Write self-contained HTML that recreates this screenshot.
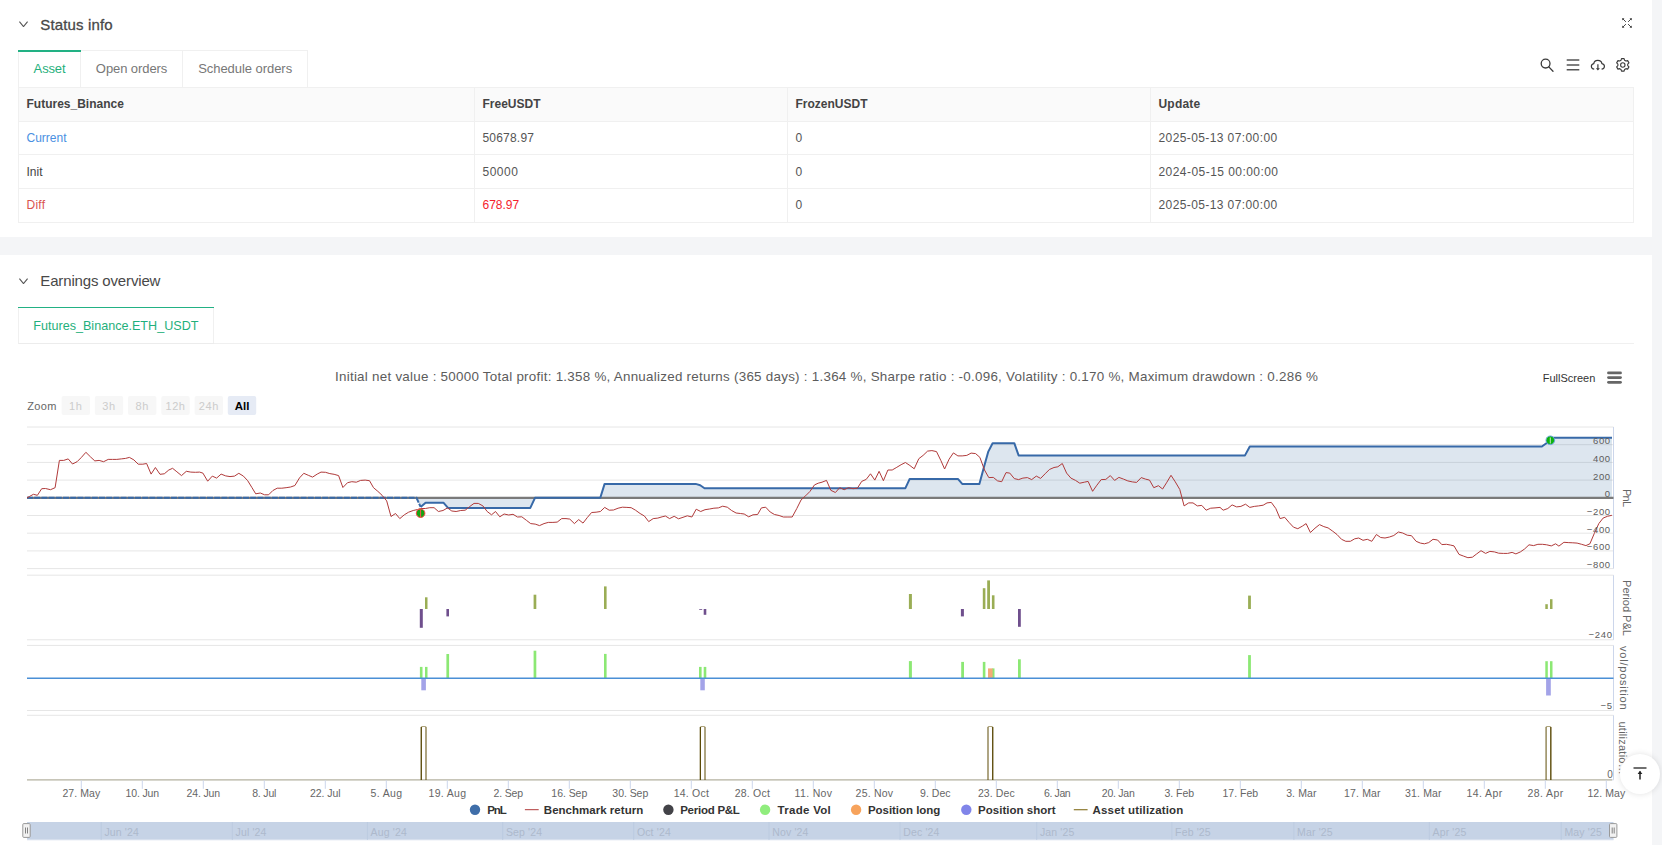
<!DOCTYPE html>
<html><head><meta charset="utf-8"><title>Backtest</title>
<style>
*{box-sizing:border-box}
html,body{margin:0;padding:0}
body{width:1662px;height:845px;overflow:hidden;background:#fff;position:relative;font-family:"Liberation Sans", sans-serif;font-size:13px;color:#555}
.abs{position:absolute}
.strip{left:1652px;top:0;width:10px;height:845px;background:#f4f5f7}
.band{left:0;top:237.3px;width:1652px;height:17.6px;background:#f4f5f7}
.h{left:40.3px;height:30px;line-height:30px;font-size:15px;color:#484848;white-space:nowrap}
#h1{letter-spacing:0.15px;-webkit-text-stroke:0.3px #484848} #h2{letter-spacing:-0.15px}
.tabs{left:18px;height:37.5px;display:flex;border:1px solid #f0f0f0;border-right:none}
.tab{height:100%;line-height:35.5px;padding:0;text-align:center;border-right:1px solid #f0f0f0;color:#777;white-space:nowrap;position:relative;font-size:13px;flex:none}
.tab.on{color:#1fb07c}
.tab.on:before{content:"";position:absolute;left:-1px;right:-1px;top:-1px;height:1.5px;background:#22b184}
table{position:absolute;left:18px;top:87px;width:1616px;border-collapse:collapse;table-layout:fixed;font-size:12px}
td,th{border:1px solid #f0f0f0;padding:0 0 0 7.5px;text-align:left;font-weight:normal;color:#555;white-space:nowrap}
th{background:#fafafa;font-weight:bold;color:#444;height:34px}
td{height:34px} tr.r1 td{height:33px} th{padding-bottom:2px} tr.r3 td{padding-bottom:2px}
td.d{letter-spacing:.4px}
.tabline{left:18px;top:343px;width:1616px;height:1px;background:#f0f0f0}
.top{left:1620px;top:754px;width:40px;height:40px;border-radius:50%;background:#fff;box-shadow:0 0 6px rgba(0,0,0,.12)}
svg text{font-family:"Liberation Sans", sans-serif}
</style></head><body>
<div class="abs strip"></div>
<div class="abs band"></div>

<svg class="abs" style="left:19px;top:20.5px" width="9" height="6.5" viewBox="0 0 9 6.5"><path d="M0.4 0.6 L4.5 5.6 L8.6 0.6" fill="none" stroke="#555" stroke-width="1.1"/></svg>
<div class="abs h" style="top:10px" id="h1">Status info</div>
<svg class="abs" style="left:1622px;top:18px" width="10" height="10" viewBox="0 0 10 10"><g stroke="#3c3c3c" stroke-width="0.95" fill="#3c3c3c">
<path d="M0.7 0.7 L3.9 3.9 M9.3 0.7 L6.1 3.9 M0.7 9.3 L3.9 6.1 M9.3 9.3 L6.1 6.1" fill="none"/>
<path d="M0.2 0.2h2.3l-2.3 2.3z M9.8 0.2h-2.3l2.3 2.3z M0.2 9.8h2.3l-2.3-2.3z M9.8 9.8h-2.3l2.3-2.3z" stroke="none"/></g></svg>

<div class="abs tabs" style="top:50px"><div class="tab on" style="width:62px;letter-spacing:-0.15px" id="t1">Asset</div><div class="tab" style="width:102.1px;letter-spacing:-0.08px" id="t2">Open orders</div><div class="tab" style="width:125.1px;letter-spacing:-0.05px" id="t3">Schedule orders</div></div>

<svg class="abs" style="left:1538px;top:56px" width="96" height="18" viewBox="1538 56 96 18" fill="none" stroke="#3a3a3a" stroke-width="1.3">
<circle cx="1545.6" cy="63.6" r="4.4"/><path d="M1548.8 66.9 L1553 71.3" stroke-linecap="round"/>
<path d="M1566.7 60.1 H1579.3 M1566.7 64.9 H1579.3 M1566.7 69.7 H1579.3" stroke="#555" stroke-width="1.5"/>
<path d="M1594.2 69.2 C1590.6 68.8 1590.4 64.2 1593.8 63.6 C1594.2 59.4 1601.2 59.2 1601.9 63.6 C1605.4 64.2 1605.2 68.8 1601.6 69.2" stroke-width="1.2"/>
<path d="M1597.9 64.3 V69.3" stroke-width="1.2"/><path d="M1595.9 68.2 L1597.9 70.6 L1599.9 68.2 Z" fill="#3a3a3a" stroke="none"/>
<circle cx="1622.8" cy="65" r="2.2" stroke-width="1.1"/>
<path id="gear" stroke-width="1.1" d="M1621.5 58.6 h2.6 l0.5 1.7 l1.3 0.75 l1.75 -0.45 l1.3 2.25 l-1.25 1.25 v1.5 l1.25 1.25 l-1.3 2.25 l-1.75 -0.45 l-1.3 0.75 l-0.5 1.7 h-2.6 l-0.5 -1.7 l-1.3 -0.75 l-1.75 0.45 l-1.3 -2.25 l1.25 -1.25 v-1.5 l-1.25 -1.25 l1.3 -2.25 l1.75 0.45 l1.3 -0.75 z" stroke-linejoin="round"/>
</svg>

<table><colgroup><col style="width:456px"><col style="width:313px"><col style="width:363px"><col></colgroup>
<tr><th>Futures_Binance</th><th>FreeUSDT</th><th>FrozenUSDT</th><th style="letter-spacing:.2px">Update</th></tr>
<tr class="r1"><td style="color:#4a90e2">Current</td><td style="letter-spacing:.2px">50678.97</td><td>0</td><td class="d">2025-05-13 07:00:00</td></tr>
<tr><td style="color:#444">Init</td><td style="letter-spacing:.5px">50000</td><td>0</td><td class="d" style="letter-spacing:.45px">2024-05-15 00:00:00</td></tr>
<tr class="r3"><td style="color:#d9534f;letter-spacing:.25px">Diff</td><td style="color:#f5222d">678.97</td><td>0</td><td class="d">2025-05-13 07:00:00</td></tr>
</table>

<svg class="abs" style="left:19px;top:277.8px" width="9" height="6.5" viewBox="0 0 9 6.5"><path d="M0.4 0.6 L4.5 5.6 L8.6 0.6" fill="none" stroke="#555" stroke-width="1.1"/></svg>
<div class="abs h" style="top:266.3px" id="h2">Earnings overview</div>
<div class="abs tabline"></div>
<div class="abs tabs" style="top:306.7px;height:37.5px;border-bottom-color:#ececec"><div class="tab on" style="width:194.7px;font-size:12.6px;line-height:37.5px" id="t4">Futures_Binance.ETH_USDT</div></div>

<svg class="abs" style="left:0;top:0" width="1662" height="845" viewBox="0 0 1662 845">
<text x="826.5" y="380.8" text-anchor="middle" font-size="13.4" fill="#5c5c5c" textLength="983" lengthAdjust="spacing">Initial net value : 50000 Total profit: 1.358 %, Annualized returns (365 days) : 1.364 %, Sharpe ratio : -0.096, Volatility : 0.170 %, Maximum drawdown : 0.286 %</text>
<text x="1542.7" y="382" font-size="11" fill="#333" textLength="52.6" lengthAdjust="spacing">FullScreen</text>
<line x1="1608.5" x2="1620.5" y1="372.9" y2="372.9" stroke="#666" stroke-width="2.8" stroke-linecap="round"/>
<line x1="1608.5" x2="1620.5" y1="377.6" y2="377.6" stroke="#666" stroke-width="2.8" stroke-linecap="round"/>
<line x1="1608.5" x2="1620.5" y1="382.3" y2="382.3" stroke="#666" stroke-width="2.8" stroke-linecap="round"/>
<text x="27.2" y="410" font-size="11" fill="#666" textLength="29.3" lengthAdjust="spacing">Zoom</text>
<rect x="61.6" y="396" width="28.4" height="19" rx="2" fill="#f7f7f7"/>
<text x="75.8" y="410" text-anchor="middle" font-size="11" fill="#cccccc" letter-spacing="0.6">1h</text>
<rect x="94.8" y="396" width="28.4" height="19" rx="2" fill="#f7f7f7"/>
<text x="109.0" y="410" text-anchor="middle" font-size="11" fill="#cccccc" letter-spacing="0.6">3h</text>
<rect x="128.0" y="396" width="28.4" height="19" rx="2" fill="#f7f7f7"/>
<text x="142.2" y="410" text-anchor="middle" font-size="11" fill="#cccccc" letter-spacing="0.6">8h</text>
<rect x="161.3" y="396" width="28.4" height="19" rx="2" fill="#f7f7f7"/>
<text x="175.5" y="410" text-anchor="middle" font-size="11" fill="#cccccc" letter-spacing="0.6">12h</text>
<rect x="194.6" y="396" width="28.4" height="19" rx="2" fill="#f7f7f7"/>
<text x="208.79999999999998" y="410" text-anchor="middle" font-size="11" fill="#cccccc" letter-spacing="0.6">24h</text>
<rect x="227.8" y="396" width="28.4" height="19" rx="2" fill="#e6ebf5"/>
<text x="242.0" y="410" text-anchor="middle" font-size="11.5" font-weight="bold" fill="#000">All</text>
<line x1="27.0" x2="1613.5" y1="427.0" y2="427.0" stroke="#e6e6e6" stroke-width="1"/>
<line x1="27.0" x2="1613.5" y1="444.7" y2="444.7" stroke="#e6e6e6" stroke-width="1"/>
<line x1="27.0" x2="1613.5" y1="462.4" y2="462.4" stroke="#e6e6e6" stroke-width="1"/>
<line x1="27.0" x2="1613.5" y1="480.1" y2="480.1" stroke="#e6e6e6" stroke-width="1"/>
<line x1="27.0" x2="1613.5" y1="497.8" y2="497.8" stroke="#e6e6e6" stroke-width="1"/>
<line x1="27.0" x2="1613.5" y1="515.5" y2="515.5" stroke="#e6e6e6" stroke-width="1"/>
<line x1="27.0" x2="1613.5" y1="533.2" y2="533.2" stroke="#e6e6e6" stroke-width="1"/>
<line x1="27.0" x2="1613.5" y1="550.9" y2="550.9" stroke="#e6e6e6" stroke-width="1"/>
<line x1="27.0" x2="1613.5" y1="568.6" y2="568.6" stroke="#e6e6e6" stroke-width="1"/>
<line x1="1613.5" x2="1613.5" y1="427" y2="568.6" stroke="#ccd6eb" stroke-width="1"/>
<polygon points="27.0,497.8 416.5,497.8 420.6,506.9 425.6,502.7 443.4,502.7 448.0,507.9 530.3,507.9 535.0,497.8 600.3,497.8 604.6,483.9 695.7,483.9 700.2,485.2 704.5,488.2 905.4,488.2 909.7,478.9 957.9,478.9 962.2,483.9 979.4,483.9 983.7,468.0 988.3,451.6 992.6,443.2 1014.3,443.2 1018.6,455.4 1245.0,455.4 1249.8,446.5 1541.9,446.5 1546.7,443.0 1550.3,437.8 1612.0,437.8 1612.0,497.8 27.0,497.8" fill="#4572a7" fill-opacity="0.18"/>
<line x1="27.0" x2="1613.5" y1="497.8" y2="497.8" stroke="#7a7a7a" stroke-width="2.2"/>
<polyline points="27.0,497.8 416.5,497.8 420.6,506.9" fill="none" stroke="#3769a8" stroke-width="2" stroke-dasharray="6,1.2" stroke-dashoffset="0"/>
<polyline points="420.6,506.9 425.6,502.7 443.4,502.7 448.0,507.9 530.3,507.9 535.0,497.8 600.3,497.8 604.6,483.9 695.7,483.9 700.2,485.2 704.5,488.2 905.4,488.2 909.7,478.9 957.9,478.9 962.2,483.9 979.4,483.9 983.7,468.0 988.3,451.6 992.6,443.2 1014.3,443.2 1018.6,455.4 1245.0,455.4 1249.8,446.5 1541.9,446.5 1546.7,443.0 1550.3,437.8 1612.0,437.8" fill="none" stroke="#3769a8" stroke-width="2" stroke-linejoin="round"/>
<polyline points="27.0,497.8 29.8,496.3 33.4,494.3 37.4,495.3 41.7,488.7 45.5,488.5 50.5,489.7 55.1,487.7 59.4,460.4 63.7,460.4 68.2,458.9 72.5,464.0 77.1,461.7 81.4,457.4 85.9,452.3 90.5,456.9 94.8,460.9 99.1,460.4 103.6,461.7 108.2,459.4 112.5,459.4 116.8,459.4 121.3,458.9 125.6,458.4 129.4,457.4 133.9,459.9 138.2,464.2 142.8,464.2 146.6,463.5 151.1,474.1 155.4,467.5 160.0,474.3 164.3,473.8 168.8,470.0 172.6,468.3 176.9,471.8 181.5,475.6 186.3,471.3 190.8,472.1 195.4,472.3 199.6,472.1 202.9,473.1 207.7,481.2 212.3,476.1 216.6,478.1 221.1,474.1 225.7,475.9 230.0,476.6 234.5,476.1 238.8,473.3 243.4,476.1 247.7,480.7 252.0,487.7 255.7,493.8 260.3,493.0 264.6,494.8 268.6,494.8 272.9,490.5 277.2,488.2 281.8,488.2 286.1,487.7 290.6,487.0 294.9,485.5 299.5,477.9 303.8,473.3 308.3,475.3 312.6,477.1 317.2,474.1 321.0,472.1 325.5,472.3 329.8,473.6 334.1,474.3 338.6,475.6 342.9,487.5 347.5,482.7 351.8,481.7 356.3,482.2 360.6,480.4 365.2,480.1 369.5,480.7 373.5,487.7 377.8,491.3 382.1,495.3 386.7,500.9 391.0,516.5 395.5,513.5 399.8,518.6 404.3,514.8 408.6,512.2 413.2,510.5 417.5,509.5 420.7,508.5 425.3,508.5 429.8,507.7 434.1,507.7 438.4,511.5 443.0,510.5 447.5,507.9 451.8,511.0 456.1,511.5 460.7,510.5 465.2,510.2 469.5,506.7 474.0,503.4 478.3,503.4 482.9,505.9 487.2,511.5 491.5,514.8 495.5,511.5 499.8,516.8 504.1,514.0 508.7,515.0 513.0,514.3 517.5,517.0 521.8,516.8 526.4,520.3 530.7,523.6 535.2,524.1 539.5,525.6 544.0,523.6 548.3,522.4 552.9,522.4 557.2,522.1 561.7,518.6 566.0,518.6 569.8,519.1 574.4,523.6 578.7,519.6 583.0,523.1 587.5,517.3 591.6,512.5 596.1,512.2 600.4,511.5 604.7,507.4 609.2,510.2 613.5,510.0 618.1,508.2 622.4,507.2 626.9,507.4 631.2,507.7 635.5,510.2 640.1,513.5 644.4,516.0 648.7,521.6 653.2,518.6 657.8,518.1 662.1,516.8 665.4,516.0 669.6,518.6 674.2,516.3 678.5,518.8 683.0,517.3 687.3,515.8 691.9,517.0 696.2,509.2 700.7,511.5 705.0,509.7 709.6,509.0 713.9,508.2 718.4,507.9 722.7,506.2 727.3,507.2 731.6,510.5 736.1,513.0 740.4,513.5 744.2,514.0 748.7,516.8 753.0,514.8 757.6,514.5 761.4,507.9 765.7,507.2 770.2,512.0 774.5,514.5 779.1,515.5 783.4,517.0 787.9,517.0 792.2,517.0 796.8,508.5 801.1,499.9 805.6,495.8 809.9,491.5 814.5,484.9 818.2,483.2 822.0,482.2 826.5,480.4 830.8,490.3 835.4,492.5 839.7,487.7 844.2,489.7 848.5,487.7 853.1,488.7 857.4,488.2 861.7,481.4 866.2,479.4 870.5,473.8 874.8,480.1 879.1,471.3 883.4,480.7 887.9,470.0 892.2,470.0 896.8,467.3 901.1,464.7 905.4,462.5 909.9,465.5 914.2,468.8 918.8,458.7 923.1,455.4 927.6,451.1 931.9,450.6 936.5,451.6 940.8,460.4 944.6,469.0 949.1,459.2 953.4,452.9 957.9,455.9 962.2,455.9 966.8,455.4 971.1,453.1 975.6,453.6 979.9,457.4 984.5,470.0 988.8,477.6 993.3,477.4 997.6,480.9 1001.7,481.7 1006.0,472.6 1009.8,473.1 1014.3,478.6 1018.6,479.6 1022.9,478.1 1027.4,477.6 1031.7,479.6 1036.3,476.1 1040.6,478.4 1045.1,473.8 1049.4,469.5 1054.0,467.5 1057.8,466.8 1062.3,463.5 1066.6,473.1 1070.9,478.1 1075.5,480.4 1079.8,483.2 1084.3,482.2 1088.1,481.4 1092.6,491.3 1096.9,485.2 1101.2,479.6 1105.8,479.4 1110.3,475.6 1114.6,480.4 1118.9,477.4 1123.5,479.1 1127.8,480.9 1132.3,481.9 1136.6,482.4 1141.2,477.6 1145.5,479.1 1149.5,480.1 1153.8,487.7 1158.4,485.7 1162.6,489.0 1166.9,482.2 1171.0,475.3 1175.3,481.9 1179.8,489.5 1184.1,505.9 1188.7,502.9 1193.0,502.9 1197.3,505.9 1201.8,505.4 1206.1,510.2 1210.7,508.2 1215.0,507.9 1220.0,507.4 1223.2,510.2 1227.8,508.5 1232.1,504.9 1236.6,506.9 1240.9,506.4 1245.5,504.2 1249.8,507.4 1254.3,506.4 1258.6,505.9 1263.2,505.2 1267.0,502.9 1271.3,502.4 1275.8,508.5 1280.1,518.6 1284.7,517.3 1289.0,522.4 1293.5,527.2 1297.8,528.7 1302.4,526.1 1306.1,523.6 1310.4,532.5 1315.0,528.2 1319.5,524.6 1323.8,526.6 1328.1,527.9 1332.7,531.2 1337.0,534.5 1341.5,539.3 1345.8,541.3 1350.4,541.3 1354.7,538.8 1358.7,538.0 1363.0,540.3 1367.3,539.3 1371.8,541.3 1376.4,534.5 1380.7,537.5 1385.0,538.0 1389.5,537.0 1393.8,535.5 1398.4,532.0 1402.7,533.0 1407.2,535.2 1411.5,535.7 1416.1,541.3 1420.4,543.1 1424.4,543.8 1428.7,542.6 1433.0,539.3 1437.6,540.0 1441.8,544.6 1446.4,544.3 1450.7,545.1 1454.0,545.9 1459.0,554.4 1463.3,556.0 1467.9,557.7 1472.4,557.2 1476.7,553.9 1481.0,550.7 1485.6,553.4 1489.9,551.4 1494.4,551.9 1498.7,553.2 1503.3,553.4 1507.6,553.4 1512.1,552.4 1515.9,553.9 1520.4,551.9 1524.7,548.9 1529.0,544.8 1533.6,545.6 1537.9,544.3 1542.4,544.3 1546.7,544.8 1551.3,545.9 1555.6,543.8 1558.9,546.1 1563.9,542.3 1568.2,542.6 1572.8,542.8 1577.1,543.1 1581.6,544.3 1585.9,545.6 1589.9,543.8 1594.2,533.7 1598.8,523.6 1603.1,518.1 1607.4,516.3 1611.9,515.3" fill="none" stroke="#b03a3a" stroke-width="1" stroke-linejoin="round"/>
<circle cx="420.6" cy="513.2" r="4.3" fill="#12a512" stroke="#ff4848" stroke-width="1"/>
<line x1="420.6" x2="420.6" y1="509.5" y2="517" stroke="#ff5050" stroke-width="1"/>
<circle cx="1550.3" cy="440.3" r="4.3" fill="#0db30d" stroke="#6aa5e0" stroke-width="1"/>
<line x1="1550.3" x2="1550.3" y1="437.5" y2="443.5" stroke="#bfe8bf" stroke-width="1"/>
<text x="1610.8" y="444.2" text-anchor="end" font-size="9.5" fill="#5c5c5c" letter-spacing="0.65">600</text>
<text x="1610.8" y="461.9" text-anchor="end" font-size="9.5" fill="#5c5c5c" letter-spacing="0.65">400</text>
<text x="1610.8" y="479.6" text-anchor="end" font-size="9.5" fill="#5c5c5c" letter-spacing="0.65">200</text>
<text x="1610.8" y="497.3" text-anchor="end" font-size="9.5" fill="#5c5c5c" letter-spacing="0.65">0</text>
<text x="1610.8" y="515.0" text-anchor="end" font-size="9.5" fill="#5c5c5c" letter-spacing="0.65">−200</text>
<text x="1610.8" y="532.7" text-anchor="end" font-size="9.5" fill="#5c5c5c" letter-spacing="0.65">−400</text>
<text x="1610.8" y="550.4" text-anchor="end" font-size="9.5" fill="#5c5c5c" letter-spacing="0.65">−600</text>
<text x="1610.8" y="568.1" text-anchor="end" font-size="9.5" fill="#5c5c5c" letter-spacing="0.65">−800</text>
<text transform="translate(1626.4,498.0) rotate(90)" text-anchor="middle" font-size="11" fill="#666" textLength="18.2" lengthAdjust="spacing" dy="0.35em">PnL</text>
<line x1="27.0" x2="1613.5" y1="575.2" y2="575.2" stroke="#e6e6e6"/>
<line x1="27.0" x2="1613.5" y1="639.8" y2="639.8" stroke="#e6e6e6"/>
<line x1="1613.5" x2="1613.5" y1="575.2" y2="639.8" stroke="#ccd6eb"/>
<rect x="425.0" y="597.3" width="2.5" height="11.7" fill="#9aad55"/>
<rect x="419.8" y="609.0" width="3.0" height="18.8" fill="#6f4f8d"/>
<rect x="446.4" y="609.0" width="2.6" height="7.4" fill="#6f4f8d"/>
<rect x="533.6" y="594.7" width="2.7" height="14.3" fill="#9aad55"/>
<rect x="604.0" y="586.4" width="2.6" height="22.6" fill="#9aad55"/>
<rect x="703.7" y="609.0" width="2.6" height="5.8" fill="#6f4f8d"/>
<rect x="699.2" y="609.0" width="3.0" height="0.8" fill="#6f4f8d"/>
<rect x="908.9" y="594.0" width="3.0" height="15.0" fill="#9aad55"/>
<rect x="960.9" y="609.0" width="3.0" height="7.4" fill="#6f4f8d"/>
<rect x="982.8" y="588.2" width="2.6" height="20.8" fill="#9aad55"/>
<rect x="987.2" y="580.4" width="2.8" height="28.6" fill="#9aad55"/>
<rect x="991.9" y="595.3" width="2.6" height="13.7" fill="#9aad55"/>
<rect x="1018.0" y="609.0" width="2.8" height="17.8" fill="#6f4f8d"/>
<rect x="1248.1" y="595.6" width="2.8" height="13.4" fill="#9aad55"/>
<rect x="1545.3" y="604.2" width="2.5" height="4.8" fill="#9aad55"/>
<rect x="1550.0" y="599.2" width="2.5" height="9.8" fill="#9aad55"/>
<text x="1612.6" y="638.2" text-anchor="end" font-size="9.5" fill="#5c5c5c" letter-spacing="0.65">−240</text>
<text transform="translate(1626.4,608.0) rotate(90)" text-anchor="middle" font-size="11" fill="#666" textLength="55.8" lengthAdjust="spacing" dy="0.35em">Period P&amp;L</text>
<line x1="27.0" x2="1613.5" y1="645.4" y2="645.4" stroke="#e6e6e6"/>
<line x1="27.0" x2="1613.5" y1="710.5" y2="710.5" stroke="#e6e6e6"/>
<line x1="1613.5" x2="1613.5" y1="645.4" y2="710.5" stroke="#ccd6eb"/>
<rect x="419.9" y="666.9" width="2.6" height="11.4" fill="#8ce874"/>
<rect x="425.0" y="666.9" width="2.5" height="11.4" fill="#8ce874"/>
<rect x="446.4" y="654.0" width="2.7" height="24.3" fill="#8ce874"/>
<rect x="533.6" y="650.7" width="2.7" height="27.6" fill="#8ce874"/>
<rect x="604.0" y="653.9" width="2.6" height="24.4" fill="#8ce874"/>
<rect x="699.0" y="666.9" width="2.6" height="11.4" fill="#8ce874"/>
<rect x="703.7" y="666.9" width="2.6" height="11.4" fill="#8ce874"/>
<rect x="908.9" y="661.1" width="3.0" height="17.2" fill="#8ce874"/>
<rect x="961.2" y="661.9" width="2.8" height="16.4" fill="#8ce874"/>
<rect x="982.8" y="661.9" width="2.6" height="16.4" fill="#8ce874"/>
<rect x="991.9" y="668.4" width="2.6" height="9.9" fill="#8ce874"/>
<rect x="1018.0" y="659.3" width="2.8" height="19.0" fill="#8ce874"/>
<rect x="1248.1" y="655.1" width="2.8" height="23.2" fill="#8ce874"/>
<rect x="1545.3" y="661.2" width="2.5" height="17.1" fill="#8ce874"/>
<rect x="1550.0" y="661.2" width="2.5" height="17.1" fill="#8ce874"/>
<rect x="988.0" y="668.4" width="4.6" height="9.9" fill="#f5ab78"/>
<rect x="421.3" y="678.3" width="4.6" height="12.0" fill="#a3a3e8"/>
<rect x="700.3" y="678.3" width="4.5" height="12.0" fill="#a3a3e8"/>
<rect x="1546.1" y="678.3" width="4.7" height="17.2" fill="#a3a3e8"/>
<line x1="27.0" x2="1613.5" y1="678.3" y2="678.3" stroke="#4a8fd6" stroke-width="1.6"/>
<text x="1612.6" y="708.8" text-anchor="end" font-size="9.5" fill="#5c5c5c" letter-spacing="0.65">−5</text>
<text transform="translate(1624.1,677.8) rotate(90)" text-anchor="middle" font-size="11" fill="#666" textLength="63.6" lengthAdjust="spacing" dy="0.35em">vol/position</text>
<line x1="27.0" x2="1613.5" y1="715.3" y2="715.3" stroke="#e6e6e6"/>
<line x1="1613.5" x2="1613.5" y1="715.3" y2="779.8" stroke="#ccd6eb"/>
<line x1="27.0" x2="1613.5" y1="779.9" y2="779.9" stroke="#ccd6eb"/>
<line x1="27.0" x2="1612" y1="779.9" y2="779.9" stroke="#8d7a2f" stroke-opacity="0.4" stroke-width="1.2"/>
<polyline points="421.3,779.9 421.3,727.3 422.1,726.5 425.2,726.5 426.0,727.3 426.0,779.9" fill="none" stroke="#6b5a12" stroke-opacity="0.55" stroke-width="1.2"/>
<polyline points="700.4,779.9 700.4,727.3 701.2,726.5 704.2,726.5 705.0,727.3 705.0,779.9" fill="none" stroke="#6b5a12" stroke-opacity="0.55" stroke-width="1.2"/>
<polyline points="988.0,779.9 988.0,727.3 988.8,726.5 991.9,726.5 992.7,727.3 992.7,779.9" fill="none" stroke="#6b5a12" stroke-opacity="0.55" stroke-width="1.2"/>
<polyline points="1546.1,779.9 1546.1,727.3 1546.9,726.5 1550.0,726.5 1550.8,727.3 1550.8,779.9" fill="none" stroke="#6b5a12" stroke-opacity="0.55" stroke-width="1.2"/>
<line x1="421.3" x2="421.3" y1="727.0" y2="779.9" stroke="#5a4a08" stroke-width="1.2" stroke-opacity="1"/>
<line x1="426.0" x2="426.0" y1="727.0" y2="779.9" stroke="#5a4a08" stroke-width="1.2" stroke-opacity="0.45"/>
<line x1="700.4" x2="700.4" y1="727.0" y2="779.9" stroke="#5a4a08" stroke-width="1.2" stroke-opacity="1"/>
<line x1="705.0" x2="705.0" y1="727.0" y2="779.9" stroke="#5a4a08" stroke-width="1.2" stroke-opacity="0.45"/>
<line x1="988.0" x2="988.0" y1="727.0" y2="779.9" stroke="#5a4a08" stroke-width="1.2" stroke-opacity="0.45"/>
<line x1="992.7" x2="992.7" y1="727.0" y2="779.9" stroke="#5a4a08" stroke-width="1.2" stroke-opacity="1"/>
<line x1="1546.1" x2="1546.1" y1="727.0" y2="779.9" stroke="#5a4a08" stroke-width="1.2" stroke-opacity="0.45"/>
<line x1="1550.8" x2="1550.8" y1="727.0" y2="779.9" stroke="#5a4a08" stroke-width="1.2" stroke-opacity="1"/>
<text x="1612.8" y="777.9" text-anchor="end" font-size="10" fill="#666">0</text>
<text transform="translate(1623.0,748.1) rotate(90)" text-anchor="middle" font-size="11" fill="#666" textLength="53.2" lengthAdjust="spacing" dy="0.35em">utilizatio…</text>
<line x1="81.3" x2="81.3" y1="780.4" y2="788.8" stroke="#ccd6eb"/>
<text x="81.3" y="796.9" text-anchor="middle" font-size="10.5" fill="#666" textLength="37.8" lengthAdjust="spacing">27. May</text>
<line x1="142.3" x2="142.3" y1="780.4" y2="788.8" stroke="#ccd6eb"/>
<text x="142.3" y="796.9" text-anchor="middle" font-size="10.5" fill="#666" textLength="33.6" lengthAdjust="spacing">10. Jun</text>
<line x1="203.3" x2="203.3" y1="780.4" y2="788.8" stroke="#ccd6eb"/>
<text x="203.3" y="796.9" text-anchor="middle" font-size="10.5" fill="#666" textLength="33.6" lengthAdjust="spacing">24. Jun</text>
<line x1="264.3" x2="264.3" y1="780.4" y2="788.8" stroke="#ccd6eb"/>
<text x="264.3" y="796.9" text-anchor="middle" font-size="10.5" fill="#666" textLength="24.2" lengthAdjust="spacing">8. Jul</text>
<line x1="325.3" x2="325.3" y1="780.4" y2="788.8" stroke="#ccd6eb"/>
<text x="325.3" y="796.9" text-anchor="middle" font-size="10.5" fill="#666" textLength="30.4" lengthAdjust="spacing">22. Jul</text>
<line x1="386.3" x2="386.3" y1="780.4" y2="788.8" stroke="#ccd6eb"/>
<text x="386.3" y="796.9" text-anchor="middle" font-size="10.5" fill="#666" textLength="31.5" lengthAdjust="spacing">5. Aug</text>
<line x1="447.3" x2="447.3" y1="780.4" y2="788.8" stroke="#ccd6eb"/>
<text x="447.3" y="796.9" text-anchor="middle" font-size="10.5" fill="#666" textLength="37.7" lengthAdjust="spacing">19. Aug</text>
<line x1="508.3" x2="508.3" y1="780.4" y2="788.8" stroke="#ccd6eb"/>
<text x="508.3" y="796.9" text-anchor="middle" font-size="10.5" fill="#666" textLength="29.7" lengthAdjust="spacing">2. Sep</text>
<line x1="569.3" x2="569.3" y1="780.4" y2="788.8" stroke="#ccd6eb"/>
<text x="569.3" y="796.9" text-anchor="middle" font-size="10.5" fill="#666" textLength="35.9" lengthAdjust="spacing">16. Sep</text>
<line x1="630.3" x2="630.3" y1="780.4" y2="788.8" stroke="#ccd6eb"/>
<text x="630.3" y="796.9" text-anchor="middle" font-size="10.5" fill="#666" textLength="35.9" lengthAdjust="spacing">30. Sep</text>
<line x1="691.3" x2="691.3" y1="780.4" y2="788.8" stroke="#ccd6eb"/>
<text x="691.3" y="796.9" text-anchor="middle" font-size="10.5" fill="#666" textLength="35.2" lengthAdjust="spacing">14. Oct</text>
<line x1="752.3" x2="752.3" y1="780.4" y2="788.8" stroke="#ccd6eb"/>
<text x="752.3" y="796.9" text-anchor="middle" font-size="10.5" fill="#666" textLength="35.2" lengthAdjust="spacing">28. Oct</text>
<line x1="813.3" x2="813.3" y1="780.4" y2="788.8" stroke="#ccd6eb"/>
<text x="813.3" y="796.9" text-anchor="middle" font-size="10.5" fill="#666" textLength="37.4" lengthAdjust="spacing">11. Nov</text>
<line x1="874.3" x2="874.3" y1="780.4" y2="788.8" stroke="#ccd6eb"/>
<text x="874.3" y="796.9" text-anchor="middle" font-size="10.5" fill="#666" textLength="37.4" lengthAdjust="spacing">25. Nov</text>
<line x1="935.3" x2="935.3" y1="780.4" y2="788.8" stroke="#ccd6eb"/>
<text x="935.3" y="796.9" text-anchor="middle" font-size="10.5" fill="#666" textLength="30.5" lengthAdjust="spacing">9. Dec</text>
<line x1="996.3" x2="996.3" y1="780.4" y2="788.8" stroke="#ccd6eb"/>
<text x="996.3" y="796.9" text-anchor="middle" font-size="10.5" fill="#666" textLength="36.7" lengthAdjust="spacing">23. Dec</text>
<line x1="1057.3" x2="1057.3" y1="780.4" y2="788.8" stroke="#ccd6eb"/>
<text x="1057.3" y="796.9" text-anchor="middle" font-size="10.5" fill="#666" textLength="26.8" lengthAdjust="spacing">6. Jan</text>
<line x1="1118.3" x2="1118.3" y1="780.4" y2="788.8" stroke="#ccd6eb"/>
<text x="1118.3" y="796.9" text-anchor="middle" font-size="10.5" fill="#666" textLength="33.0" lengthAdjust="spacing">20. Jan</text>
<line x1="1179.3" x2="1179.3" y1="780.4" y2="788.8" stroke="#ccd6eb"/>
<text x="1179.3" y="796.9" text-anchor="middle" font-size="10.5" fill="#666" textLength="29.6" lengthAdjust="spacing">3. Feb</text>
<line x1="1240.3" x2="1240.3" y1="780.4" y2="788.8" stroke="#ccd6eb"/>
<text x="1240.3" y="796.9" text-anchor="middle" font-size="10.5" fill="#666" textLength="35.8" lengthAdjust="spacing">17. Feb</text>
<line x1="1301.3" x2="1301.3" y1="780.4" y2="788.8" stroke="#ccd6eb"/>
<text x="1301.3" y="796.9" text-anchor="middle" font-size="10.5" fill="#666" textLength="30.3" lengthAdjust="spacing">3. Mar</text>
<line x1="1362.3" x2="1362.3" y1="780.4" y2="788.8" stroke="#ccd6eb"/>
<text x="1362.3" y="796.9" text-anchor="middle" font-size="10.5" fill="#666" textLength="36.5" lengthAdjust="spacing">17. Mar</text>
<line x1="1423.3" x2="1423.3" y1="780.4" y2="788.8" stroke="#ccd6eb"/>
<text x="1423.3" y="796.9" text-anchor="middle" font-size="10.5" fill="#666" textLength="36.5" lengthAdjust="spacing">31. Mar</text>
<line x1="1484.3" x2="1484.3" y1="780.4" y2="788.8" stroke="#ccd6eb"/>
<text x="1484.3" y="796.9" text-anchor="middle" font-size="10.5" fill="#666" textLength="35.7" lengthAdjust="spacing">14. Apr</text>
<line x1="1545.3" x2="1545.3" y1="780.4" y2="788.8" stroke="#ccd6eb"/>
<text x="1545.3" y="796.9" text-anchor="middle" font-size="10.5" fill="#666" textLength="35.7" lengthAdjust="spacing">28. Apr</text>
<line x1="1606.3" x2="1606.3" y1="780.4" y2="788.8" stroke="#ccd6eb"/>
<text x="1606.3" y="796.9" text-anchor="middle" font-size="10.5" fill="#666" textLength="37.8" lengthAdjust="spacing">12. May</text>
<circle cx="475" cy="809.7" r="5.2" fill="#3f6ea9"/>
<text x="487.2" y="813.7" font-size="11.5" font-weight="bold" fill="#333" textLength="19.5" lengthAdjust="spacing">PnL</text>
<line x1="524.9" x2="538.7" y1="809.7" y2="809.7" stroke="#b03a3a" stroke-width="1"/>
<text x="543.8" y="813.7" font-size="11.5" font-weight="bold" fill="#333" textLength="99.4" lengthAdjust="spacing">Benchmark return</text>
<circle cx="668.4" cy="809.7" r="5.2" fill="#434348"/>
<text x="680.2" y="813.7" font-size="11.5" font-weight="bold" fill="#333" textLength="59.7" lengthAdjust="spacing">Period P&amp;L</text>
<circle cx="765.1" cy="809.7" r="5.2" fill="#90ed7d"/>
<text x="777.6" y="813.7" font-size="11.5" font-weight="bold" fill="#333" textLength="53.2" lengthAdjust="spacing">Trade Vol</text>
<circle cx="856.1" cy="809.7" r="5.2" fill="#f7a35c"/>
<text x="867.9" y="813.7" font-size="11.5" font-weight="bold" fill="#333" textLength="72.4" lengthAdjust="spacing">Position long</text>
<circle cx="966.3" cy="809.7" r="5.2" fill="#8085e9"/>
<text x="978.1" y="813.7" font-size="11.5" font-weight="bold" fill="#333" textLength="77.5" lengthAdjust="spacing">Position short</text>
<line x1="1073.8" x2="1087.6" y1="809.7" y2="809.7" stroke="#8d7a2f" stroke-width="1.2"/>
<text x="1092.6" y="813.7" font-size="11.5" font-weight="bold" fill="#333" textLength="90.7" lengthAdjust="spacing">Asset utilization</text>
<rect x="27.0" y="822" width="1586.5" height="17.8" fill="#c6d3e6"/>
<line x1="27.0" x2="1613.5" y1="839.8" y2="839.8" stroke="#d9e1ee"/>
<line x1="101.2" x2="101.2" y1="822" y2="839.8" stroke="#bccbe0"/>
<text x="104.4" y="835.6" font-size="10.5" fill="#adb9cc" letter-spacing="0.15">Jun '24</text>
<line x1="232.3" x2="232.3" y1="822" y2="839.8" stroke="#bccbe0"/>
<text x="235.5" y="835.6" font-size="10.5" fill="#adb9cc" letter-spacing="0.15">Jul '24</text>
<line x1="367.4" x2="367.4" y1="822" y2="839.8" stroke="#bccbe0"/>
<text x="370.59999999999997" y="835.6" font-size="10.5" fill="#adb9cc" letter-spacing="0.15">Aug '24</text>
<line x1="502.7" x2="502.7" y1="822" y2="839.8" stroke="#bccbe0"/>
<text x="505.9" y="835.6" font-size="10.5" fill="#adb9cc" letter-spacing="0.15">Sep '24</text>
<line x1="633.7" x2="633.7" y1="822" y2="839.8" stroke="#bccbe0"/>
<text x="636.9000000000001" y="835.6" font-size="10.5" fill="#adb9cc" letter-spacing="0.15">Oct '24</text>
<line x1="769.0" x2="769.0" y1="822" y2="839.8" stroke="#bccbe0"/>
<text x="772.2" y="835.6" font-size="10.5" fill="#adb9cc" letter-spacing="0.15">Nov '24</text>
<line x1="900.0" x2="900.0" y1="822" y2="839.8" stroke="#bccbe0"/>
<text x="903.2" y="835.6" font-size="10.5" fill="#adb9cc" letter-spacing="0.15">Dec '24</text>
<line x1="1036.7" x2="1036.7" y1="822" y2="839.8" stroke="#bccbe0"/>
<text x="1039.9" y="835.6" font-size="10.5" fill="#adb9cc" letter-spacing="0.15">Jan '25</text>
<line x1="1171.9" x2="1171.9" y1="822" y2="839.8" stroke="#bccbe0"/>
<text x="1175.1000000000001" y="835.6" font-size="10.5" fill="#adb9cc" letter-spacing="0.15">Feb '25</text>
<line x1="1293.9" x2="1293.9" y1="822" y2="839.8" stroke="#bccbe0"/>
<text x="1297.1000000000001" y="835.6" font-size="10.5" fill="#adb9cc" letter-spacing="0.15">Mar '25</text>
<line x1="1429.3" x2="1429.3" y1="822" y2="839.8" stroke="#bccbe0"/>
<text x="1432.5" y="835.6" font-size="10.5" fill="#adb9cc" letter-spacing="0.15">Apr '25</text>
<line x1="1561.2" x2="1561.2" y1="822" y2="839.8" stroke="#bccbe0"/>
<text x="1564.4" y="835.6" font-size="10.5" fill="#adb9cc" letter-spacing="0.15">May '25</text>
<rect x="22.8" y="823.6" width="7.4" height="13.8" rx="1" fill="#f2f2f2" stroke="#999" stroke-width="1"/>
<line x1="25.5" x2="25.5" y1="827.5" y2="833.5" stroke="#666" stroke-width="0.8"/>
<line x1="27.5" x2="27.5" y1="827.5" y2="833.5" stroke="#666" stroke-width="0.8"/>
<rect x="1609.5" y="823.6" width="7.4" height="13.8" rx="1" fill="#f2f2f2" stroke="#999" stroke-width="1"/>
<line x1="1612.2" x2="1612.2" y1="827.5" y2="833.5" stroke="#666" stroke-width="0.8"/>
<line x1="1614.2" x2="1614.2" y1="827.5" y2="833.5" stroke="#666" stroke-width="0.8"/>
</svg>

<div class="abs top"></div>
<svg class="abs" style="left:1632px;top:766px" width="16" height="16" viewBox="0 0 16 16" fill="none" stroke="#222" stroke-width="1.3"><path d="M1.5 2 H14.5"/><path d="M8 5.5 V13.5" stroke-width="1.5"/><path d="M5.6 8 L8 4.8 L10.4 8 Z" fill="#222" stroke="none"/></svg>
</body></html>
